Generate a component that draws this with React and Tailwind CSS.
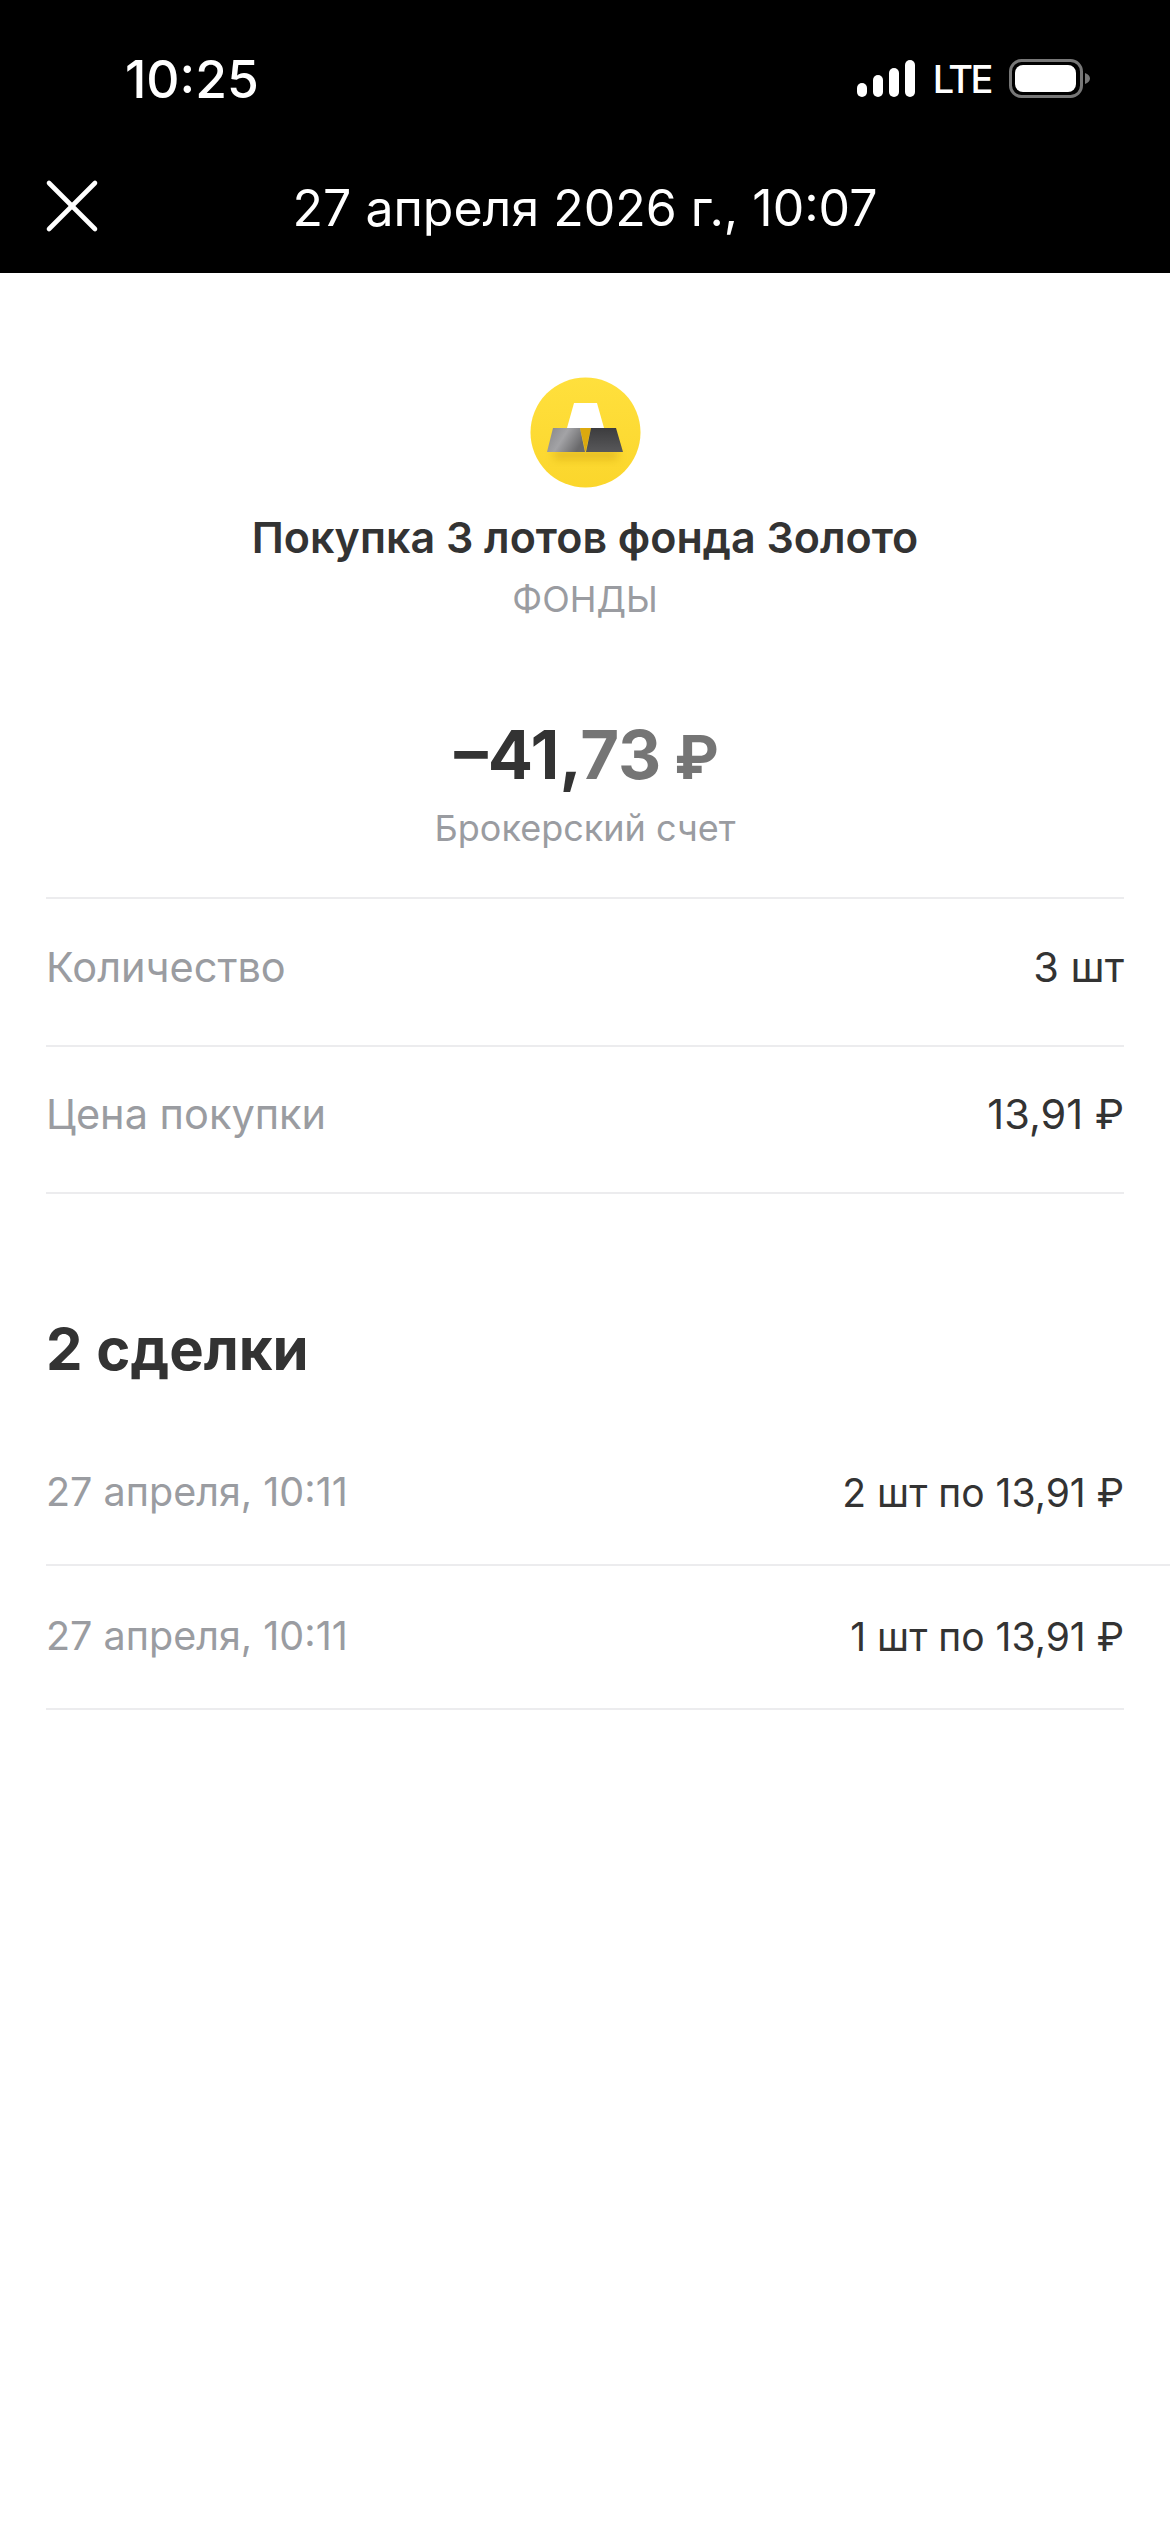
import React from 'react';
import { X } from 'lucide-react';

const font = 'font-["Inter","Noto_Sans",sans-serif]';

function StatusIcons() {
  return (
    <div className="flex items-center">
      <svg width="58" height="37" viewBox="0 0 58 37" fill="#fff">
        <rect x="0" y="23" width="10" height="14" rx="5" />
        <rect x="16" y="15" width="10" height="22" rx="5" />
        <rect x="32" y="8" width="10" height="29" rx="5" />
        <rect x="48" y="0" width="10" height="37" rx="5" />
      </svg>
      <span className="ml-[18px] text-[38px] leading-[38px] text-white font-medium tracking-[-2.5px]">LTE</span>
      <svg className="ml-[18px]" width="82" height="39" viewBox="0 0 82 39">
        <rect x="1.5" y="1.5" width="71" height="36" rx="11" fill="none" stroke="#777" strokeWidth="3" />
        <rect x="6" y="6" width="61" height="27" rx="8" fill="#fff" />
        <path d="M76 14c3 1 5 3 5 5.500s-2 4.500-5 5.500z" fill="#777" />
      </svg>
    </div>
  );
}

function GoldIcon() {
  return (
    <svg width="111" height="111" viewBox="0 0 111 111">
      <defs>
        <linearGradient id="coin" x1="0" y1="0" x2="0" y2="1">
          <stop offset="0" stopColor="#ffe03d" />
          <stop offset="1" stopColor="#fbd62c" />
        </linearGradient>
        <linearGradient id="left" x1="0" y1="0" x2="1" y2="0.4">
          <stop offset="0" stopColor="#858588" />
          <stop offset="0.5" stopColor="#a3a3a6" />
          <stop offset="1" stopColor="#69696b" />
        </linearGradient>
        <linearGradient id="right" x1="0" y1="0" x2="0" y2="1">
          <stop offset="0" stopColor="#3c3c3e" />
          <stop offset="1" stopColor="#58585a" />
        </linearGradient>
        <filter id="soft" x="-30%" y="-100%" width="160%" height="300%">
          <feGaussianBlur stdDeviation="4" />
        </filter>
      </defs>
      <circle cx="55.500" cy="55.500" r="55" fill="url(#coin)" />
      <rect x="24" y="74" width="64" height="8" fill="#c99a08" opacity="0.5" filter="url(#soft)" />
      <path d="M44 26H67L74 51H37Z" fill="#fff" />
      <path d="M50 51H61L55.500 75Z" fill="#dca90e" />
      <path d="M23 51H50L55 75H17Z" fill="url(#left)" />
      <path d="M61 51H86L93 75H56Z" fill="url(#right)" />
    </svg>
  );
}

function Row({ label, value, small }) {
  return (
    <div className={`flex justify-between items-center border-b-2 border-[#ececee] ${small ? 'h-[144px]' : 'h-[147.500px] pb-[10px]'}`}>
      <span className={`text-[#9a9ca1] ${small ? 'text-[39.500px]' : 'text-[41.500px]'}`}>{label}</span>
      <span className={`text-[#333333] ${small ? 'text-[39px]' : 'text-[41.500px]'}`}>{value}</span>
    </div>
  );
}

export default function App() {
  return (
    <div className={`w-[1170px] h-[2532px] bg-white ${font}`}>
      <header className="bg-black h-[273px] text-white relative">
        <div className="flex justify-between items-center pl-[125px] pr-[79px] pt-[53px] h-[104px]">
          <span className="text-[51.500px] leading-[50px] font-medium">10:25</span>
          <StatusIcons />
        </div>
        <div className="flex items-center justify-center h-[104px] mt-[52px]">
          <span className="text-[50px] leading-[56px]">27 апреля 2026 г., 10:07</span>
        </div>
        <X className="absolute left-[26px] top-[160px]" size={92} strokeWidth={1.2} color="#fff" />
      </header>

      <main className="px-[46px]">
        <div className="flex flex-col items-center pt-[104px]">
          <GoldIcon />
          <h1 className="mt-[24px] text-[43px] leading-[50px] font-semibold text-[#333333]">Покупка 3 лотов фонда Золото</h1>
          <p className="mt-[14px] text-[36px] leading-[46px] text-[#9a9ca1]">ФОНДЫ</p>
          <p className="mt-[93px] pl-[3px] text-[67px] leading-[80px] font-bold text-[#333333]">
            –41,<span className="text-[#757575]">73 <span className="-ml-[3px] text-[60px]">₽</span></span>
          </p>
          <p className="mt-[8px] text-[36px] leading-[46px] text-[#9a9ca1]">Брокерский счет</p>
        </div>

        <div className="mt-[46px] border-t-2 border-[#ececee]">
          <Row label="Количество" value="3 шт" />
          <Row label="Цена покупки" value="13,91 ₽" />
        </div>

        <h2 className="mt-[120px] text-[58px] leading-[70px] font-bold text-[#333333]">2 сделки</h2>

        <div className="mt-[38px]">
          <div className="-mr-[46px] pr-[46px] border-b-2 border-[#ececee] h-[144px] flex justify-between items-center">
            <span className="text-[39.500px] text-[#9a9ca1]">27 апреля, 10:11</span>
            <span className="text-[39px] text-[#333333]">2 шт по 13,91 ₽</span>
          </div>
          <Row small label="27 апреля, 10:11" value="1 шт по 13,91 ₽" />
        </div>
      </main>
    </div>
  );
}
